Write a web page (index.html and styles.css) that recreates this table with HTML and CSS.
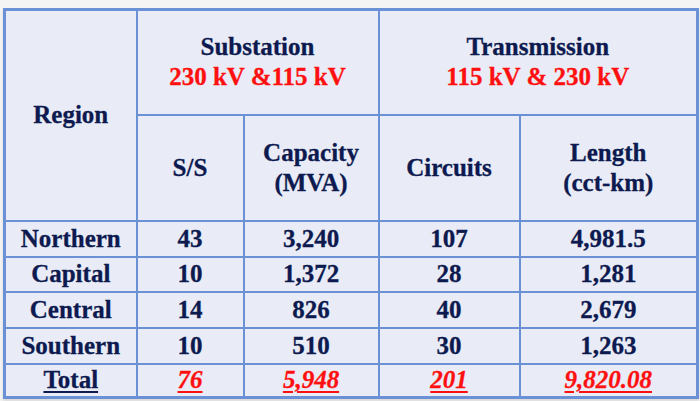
FILE: index.html
```html
<!DOCTYPE html>
<html lang="en">
<head>
  <meta charset="UTF-8" />
  <meta name="viewport" content="width=device-width, initial-scale=1.0" />
  <title>Substation and Transmission by Region</title>
  <link rel="stylesheet" href="styles.css">
</head>
<body>
  <div class="sheet">
    <table class="grid">
      <colgroup>
        <col class="c-region">
        <col class="c-ss">
        <col class="c-cap">
        <col class="c-circ">
        <col class="c-len">
      </colgroup>
      <thead>
        <tr class="head-top">
          <th rowspan="2">Region</th>
          <th colspan="2">Substation<br><span class="red">230 kV &amp;115 kV</span></th>
          <th colspan="2">Transmission<br><span class="red">115 kV &amp; 230 kV</span></th>
        </tr>
        <tr class="head-sub">
          <th>S/S</th>
          <th>Capacity<br>(MVA)</th>
          <th>Circuits</th>
          <th>Length<br>(cct-km)</th>
        </tr>
      </thead>
      <tbody>
        <tr class="r1">
          <td>Northern</td><td>43</td><td>3,240</td><td>107</td><td>4,981.5</td>
        </tr>
        <tr class="r2">
          <td>Capital</td><td>10</td><td>1,372</td><td>28</td><td>1,281</td>
        </tr>
        <tr class="r3">
          <td>Central</td><td>14</td><td>826</td><td>40</td><td>2,679</td>
        </tr>
        <tr class="r4">
          <td>Southern</td><td>10</td><td>510</td><td>30</td><td>1,263</td>
        </tr>
        <tr class="total">
          <td><u>Total</u></td>
          <td class="sum"><u>76</u></td>
          <td class="sum"><u>5,948</u></td>
          <td class="sum"><u>201</u></td>
          <td class="sum"><u>9,820.08</u></td>
        </tr>
      </tbody>
    </table>
  </div>
</body>
</html>
```

FILE: styles.css
```css
html, body {
  margin: 0;
  background: #f4f4f4;
}
body {
  width: 700px;
  height: 401px;
  overflow: hidden;
}
.sheet {
  padding: 8px 4px 0 3px;
}
.grid {
  table-layout: fixed;
  width: 693px;
  border-collapse: collapse;
  background: #e9ecf6;
  border: 3px solid #6a90d6;
  box-shadow: 0 2px 3px rgba(0, 0, 0, 0.12);
  font-family: "Liberation Serif", "Times New Roman", serif;
  font-weight: bold;
  font-size: 25px;
  line-height: 30px;
  color: #0d1a50;
  -webkit-text-stroke: 0.3px currentColor;
  text-align: center;
}
.c-region { width: 132px; }
.c-ss { width: 107px; }
.c-cap { width: 135px; }
.c-circ { width: 141px; }
.c-len { width: 178px; }
th, td {
  border: 2px solid #6a90d6;
  padding: 0;
  vertical-align: middle;
}
th {
  font-weight: bold;
}
.head-top { height: 105px; }
.head-sub { height: 106px; }
.r1 { height: 36px; }
.r2 { height: 35px; }
.r3 { height: 36px; }
.r4 { height: 36px; }
.total { height: 34px; }
.red {
  color: #ff1010;
}
.total u {
  text-decoration-thickness: 2px;
  text-underline-offset: 3px;
}
.sum {
  color: #ff1010;
  font-style: italic;
}
```
